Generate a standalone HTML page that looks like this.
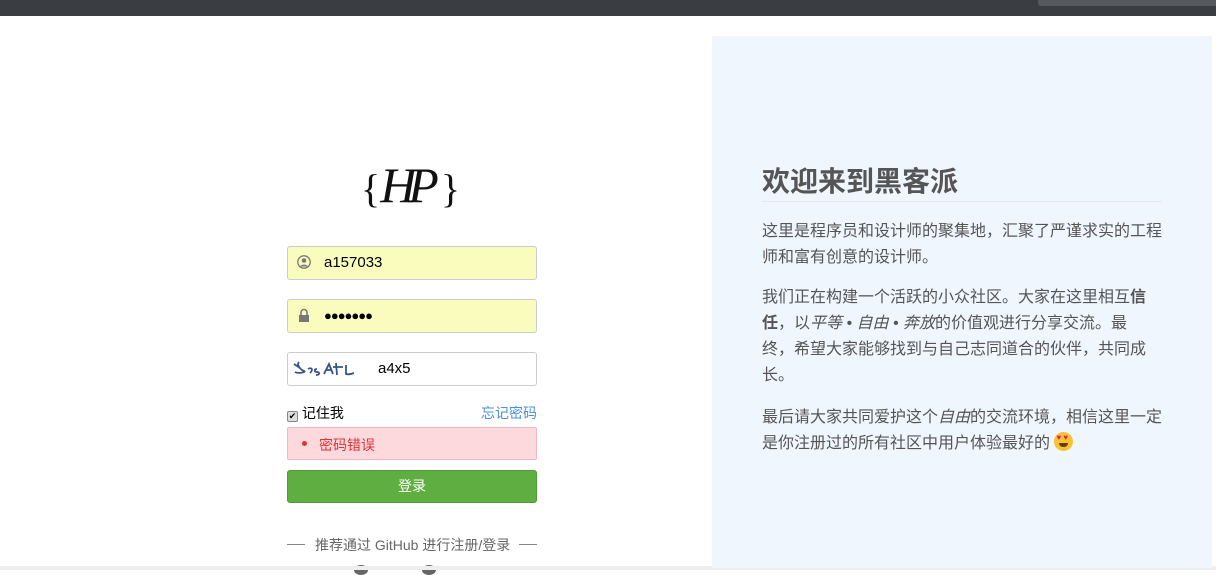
<!DOCTYPE html>
<html><head><meta charset="utf-8"><style>
*{margin:0;padding:0;box-sizing:border-box}
body{width:1216px;height:570px;overflow:hidden;background:#fff;font-family:"Liberation Sans","Noto Sans CJK SC",sans-serif;position:relative}
.top{position:absolute;left:0;top:0;width:1216px;height:16px;background:#3a3d42}
.top .s{position:absolute;left:1038px;top:0;width:178px;height:6px;background:#56595e;border-radius:0 0 0 3px}
.right{position:absolute;left:712px;top:36px;width:500px;height:532px;background:#eff6fd}
.right h1{position:absolute;left:50px;top:124px;font-size:28px;font-weight:bold;color:#555}
.right .hr{position:absolute;left:50px;top:165px;width:400px;height:1px;background:#e2e8ee}
.right .t{position:absolute;left:50px;font-size:16px;line-height:26px;color:#555;white-space:nowrap}
.in{position:absolute;left:287px;width:250px;height:34px;border:1px solid #ccc;border-radius:3px;font-size:15px;color:#000}
.y{background:#fafcbe}
.in span{position:absolute;left:36px;top:7px}
.err{position:absolute;left:287px;top:427px;width:250px;height:33px;background:#fdd9de;border:1px solid #efb9c0;border-radius:2px;color:#d33;font-size:14px}
.btn{position:absolute;left:287px;top:470px;width:250px;height:33px;background:#5fae41;border:1px solid #4e9a34;border-radius:3px;color:#fff;font-size:14px;text-align:center;line-height:31px}
</style></head><body>
<div class="top"><div class="s"></div></div>
<div style="position:absolute;left:361px;top:156px;font-size:40px;font-family:'Liberation Serif',serif;color:#111;">{<span style="font-style:italic;font-size:50px;letter-spacing:-8px;">HP</span> }</div>
<div class="in y" style="top:246px"><svg style="position:absolute;left:9px;top:8px" width="14" height="14" viewBox="0 0 14 14"><circle cx="7" cy="7" r="6.2" fill="none" stroke="#777" stroke-width="1.3"/><circle cx="7" cy="5.5" r="2.3" fill="#777"/><path d="M3 11.5c1-2.5 7-2.5 8 0" fill="#777"/></svg><span>a157033</span></div>
<div class="in y" style="top:299px"><svg style="position:absolute;left:10px;top:8px" width="12" height="15" viewBox="0 0 12 15"><path d="M3 7V4.5a3 3 0 0 1 6 0V7" fill="none" stroke="#777" stroke-width="1.6"/><rect x="1" y="7" width="10" height="7" fill="#777"/></svg><span style="font-size:13px;top:8px;letter-spacing:-1px">●●●●●●●</span></div>
<div class="in" style="top:352px;background:#fff"><svg style="position:absolute;left:3px;top:6px" width="66" height="20" viewBox="0 0 66 20"><path d="M3 5l6 4 M8 3c-3 3 2 8 5 9s-6 3-9 1 M17 10c3-2 6 0 2 4 M26 10c-3 0-3 3 0 3s3 3-1 3 M33 15l5-10 4 10 M35 11h6 M45 4l1 12 M42 8h10 M55 6v9s3 1 8-1" stroke="#35558a" stroke-width="1.8" fill="none"/></svg><span style="left:90px">a4x5</span></div>
<div style="position:absolute;left:287px;top:403px;font-size:14px;color:#000"><span style="display:inline-block;width:11px;height:11px;border:1px solid #888;border-radius:2px;background:#ddd;vertical-align:-1px;font-size:9px;line-height:9px;text-align:center">✔</span> 记住我</div>
<div style="position:absolute;left:481px;top:403px;font-size:14px;color:#4a90d9">忘记密码</div>
<div class="err"><span style="position:absolute;left:14px;top:13px;width:5px;height:5px;border-radius:50%;background:#d33"></span><span style="position:absolute;left:31px;top:7px">密码错误</span></div>
<div class="btn">登录</div>
<div style="position:absolute;left:287px;top:544px;width:18px;height:1px;background:#888"></div>
<div style="position:absolute;left:519px;top:544px;width:18px;height:1px;background:#888"></div>
<div style="position:absolute;left:315px;top:535px;font-size:14px;color:#666">推荐通过 GitHub 进行注册/登录</div>
<div style="position:absolute;left:354px;top:565px;width:14px;height:10px;border-radius:50%;background:#666"></div>
<div style="position:absolute;left:422px;top:565px;width:14px;height:10px;border-radius:50%;background:#666"></div>
<div style="position:absolute;left:0;top:566px;width:1216px;height:4px;background:#eee"></div>
<div class="right">
<h1>欢迎来到黑客派</h1>
<div class="hr"></div>
<div class="t" style="top:183px">这里是程序员和设计师的聚集地，汇聚了严谨求实的工程<br>师和富有创意的设计师。</div>
<div class="t" style="top:249px">我们正在构建一个活跃的小众社区。大家在这里相互<b>信</b><br><b>任</b>，以<i>平等 • 自由 • 奔放</i>的价值观进行分享交流。最<br>终，希望大家能够找到与自己志同道合的伙伴，共同成<br>长。</div>
<div class="t" style="top:369px">最后请大家共同爱护这个<i>自由</i>的交流环境，相信这里一定<br>是你注册过的所有社区中用户体验最好的 <span style="display:inline-block;width:19px;height:19px;border-radius:50%;background:#f8c233;vertical-align:-3px;position:relative"><span style="position:absolute;left:2px;top:2px;color:#e0245e;font-size:8px;line-height:8px">♥&nbsp;♥</span><span style="position:absolute;left:5px;top:11px;width:9px;height:4px;background:#6b3a1a;border-radius:0 0 5px 5px"></span></span></div>
</div>
</body></html>
